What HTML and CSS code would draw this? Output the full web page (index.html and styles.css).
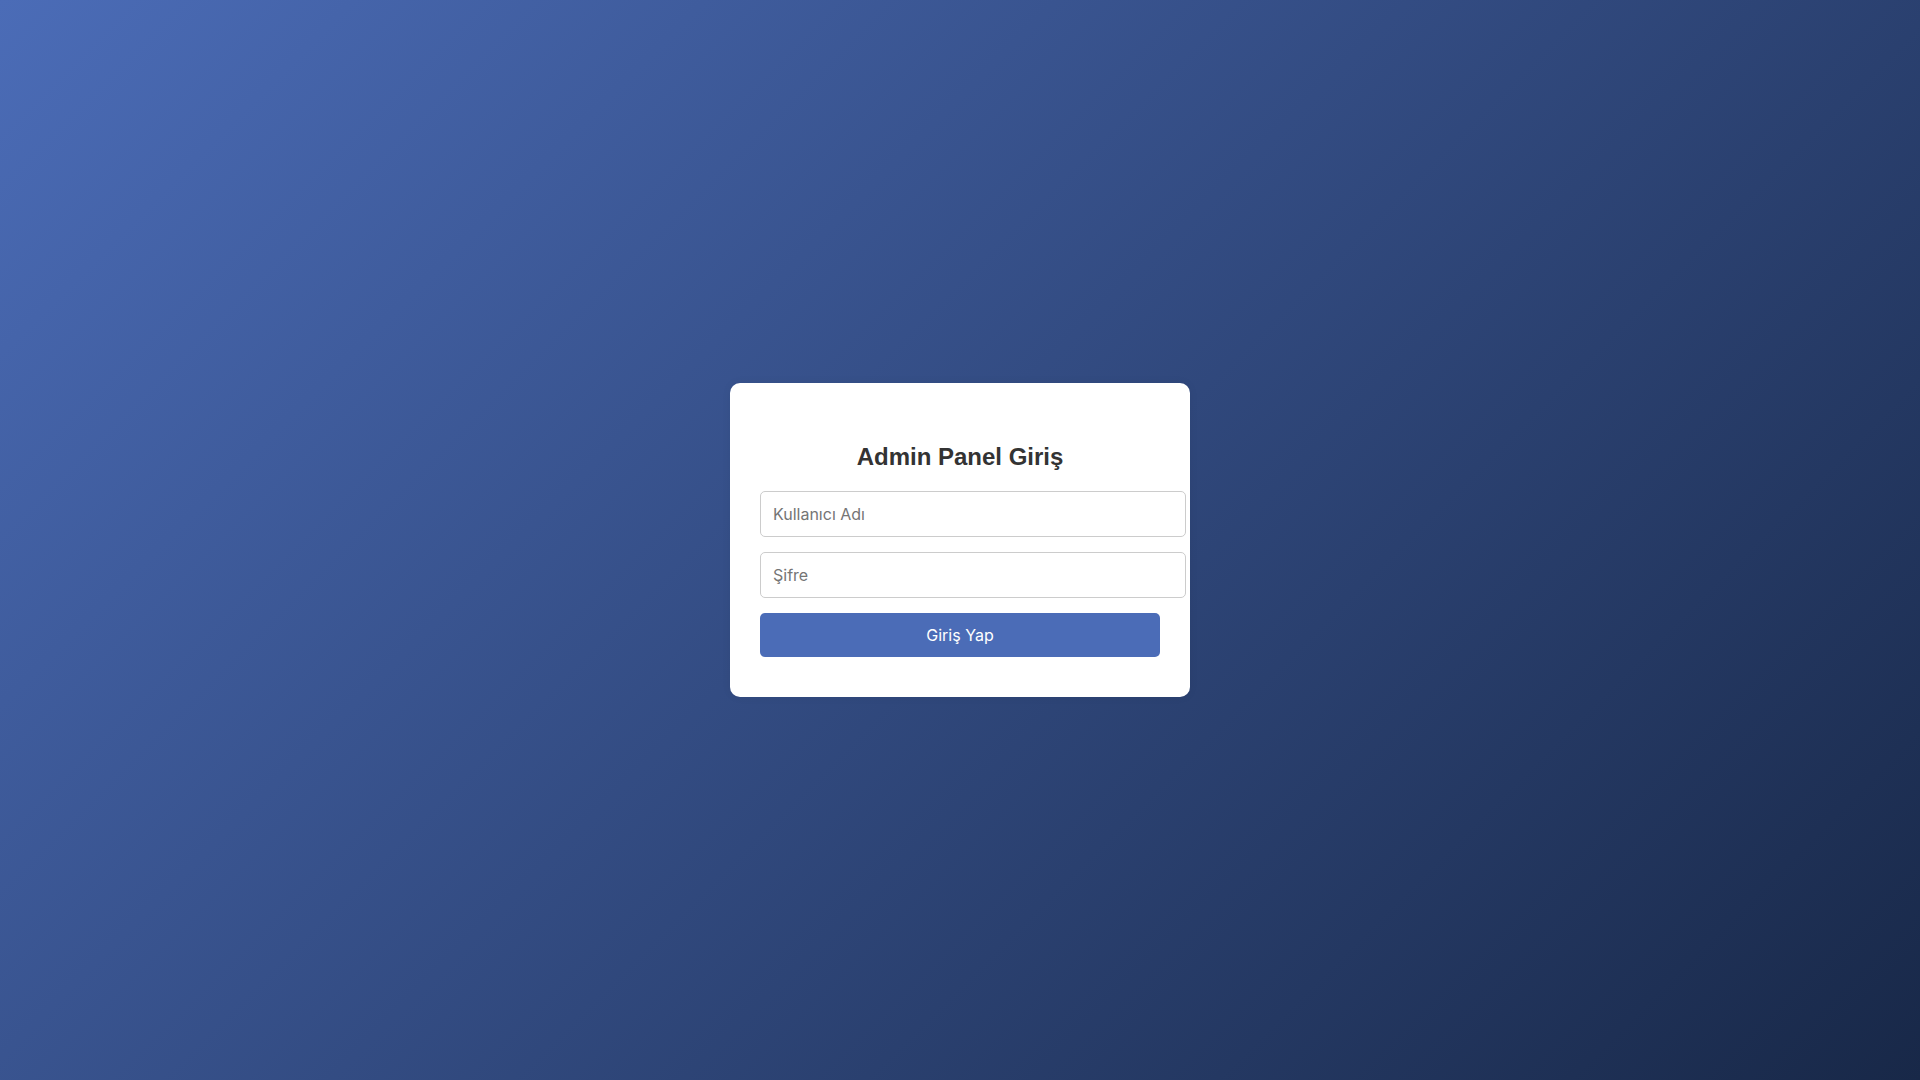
FILE: index.html
```html
<!DOCTYPE html>
<html lang="tr">
<head>
<meta charset="utf-8">
<title>Admin Panel Giriş</title>
<link rel="stylesheet" href="styles.css">
</head>
<body>
<div class="login-box">
  <h2 class="title">Admin Panel Giriş</h2>
  <form class="login-form">
    <input class="field" type="text" placeholder="Kullanıcı Adı">
    <input class="field" type="password" placeholder="Şifre">
    <button class="submit" type="submit">Giriş Yap</button>
  </form>
</div>
</body>
</html>
```
FILE: styles.css
```css
html, body {
  margin: 0;
  height: 100%;
}
body {
  font-family: "Liberation Sans", Arial, sans-serif;
  background: linear-gradient(135deg, #4b6cb7, #182848);
  display: flex;
  align-items: center;
  justify-content: center;
}
.login-box {
  background: #fff;
  width: 400px;
  padding: 40px 30px;
  border-radius: 10px;
  box-shadow: 0 0 10px rgba(0, 0, 0, 0.06);
}
.title {
  font-size: 24px;
  font-weight: bold;
  color: #333;
  text-align: center;
  margin: 20px 0;
}
.login-form {
  margin: 0;
}
.field {
  display: block;
  width: 100%;
  padding: 12px;
  margin: 0 0 15px;
  border: 1px solid #ccc;
  border-radius: 5px;
  font-family: Inter, "Noto Sans", sans-serif;
  font-size: 16px;
  color: #333;
  background: #fff;
}
.field::placeholder {
  color: #757575;
}
.submit {
  display: block;
  width: 100%;
  padding: 12px;
  border: none;
  border-radius: 5px;
  background: #4b6cb7;
  color: #fff;
  font-family: Inter, "Noto Sans", sans-serif;
  font-size: 16px;
  cursor: pointer;
}
```
